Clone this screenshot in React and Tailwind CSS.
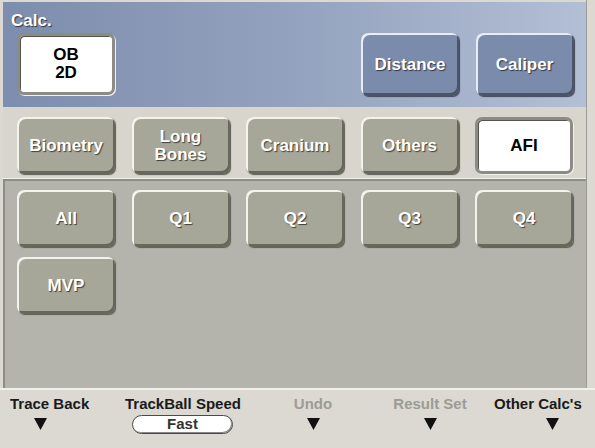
import React from "react";

const greyBtn =
  "flex items-center justify-center w-[98px] rounded-[7px] bg-[#a7a799] text-white font-bold text-[17px] leading-[18px] text-center [text-shadow:1px_1px_1px_#3f3f38] shadow-[inset_2px_2px_0_#f4f4ee,inset_-2px_-3px_0_#67675c,1px_1px_1px_#5c5c55]";

const blueBtn =
  "flex items-center justify-center w-[98px] h-[63px] rounded-[7px] bg-[#7b8bab] text-white font-bold text-[17px] [text-shadow:1px_1px_1px_#2f3545] shadow-[inset_2px_2px_0_#e8ecf4,inset_-2px_-3px_0_#4b5469,1px_1px_1px_#404656]";

const whiteBtn =
  "flex items-center justify-center w-[98px] rounded-[7px] bg-white text-black font-bold text-[17px] leading-[18px] text-center border-[3px] border-[#8c8c84] shadow-[inset_1px_1px_0_#55554f,1px_1px_0_#f2f2ec]";

const Arrow = () => (
  <svg width="13" height="12" viewBox="0 0 13 12">
    <polygon points="0,0 13,0 6.5,12" fill="#111" />
  </svg>
);

const Label = ({ children, dim }) => (
  <span
    className={
      "block whitespace-nowrap text-[15px] font-bold leading-[16px] " +
      (dim ? "text-[#9c9c96]" : "text-[#1a1a1a]")
    }
  >
    {children}
  </span>
);

export default function App() {
  return (
    <div className="w-[595px] h-[448px] bg-[#dbd9d1] font-['Liberation_Sans',Arial,sans-serif] overflow-hidden flex flex-col">
      <div className="ml-[3px] mr-[8px] h-[388px] flex flex-col border-r border-[#9c9c96]">
        {/* header */}
        <div className="h-[105px] mt-[2px] bg-gradient-to-r from-[#7d8dad] via-[#93a2be] to-[#b3bfd5] relative">
          <div className="absolute left-[8px] top-[6px] text-white font-bold text-[17px] [text-shadow:1px_1px_1px_#2f3545]">
            Calc.
          </div>
          <div className="flex pt-[31px] pl-[14px] gap-[16.5px]">
            <div className={whiteBtn + " h-[62px]"}>
              OB
              <br />
              2D
            </div>
            <div className="w-[213px]" />
            <div className={blueBtn}>Distance</div>
            <div className={blueBtn}>Caliper</div>
          </div>
        </div>

        {/* category row */}
        <div className="h-[72px] bg-[#d7d5cc] flex gap-[16.5px] pl-[14px] pt-[10px] border-b border-[#f2f2ec]">
          <div className={greyBtn + " h-[57px]"}>Biometry</div>
          <div className={greyBtn + " h-[57px]"}>
            Long
            <br />
            Bones
          </div>
          <div className={greyBtn + " h-[57px]"}>Cranium</div>
          <div className={greyBtn + " h-[57px]"}>Others</div>
          <div className={whiteBtn + " h-[57px]"}>AFI</div>
        </div>

        {/* sub buttons */}
        <div className="flex-1 bg-[#b4b4ad] border-t-2 border-l-2 border-[#8e8e88] pl-[12px] pt-[9px] flex flex-col gap-[10px]">
          <div className="flex gap-[16.5px]">
            <div className={greyBtn + " h-[57px]"}>All</div>
            <div className={greyBtn + " h-[57px]"}>Q1</div>
            <div className={greyBtn + " h-[57px]"}>Q2</div>
            <div className={greyBtn + " h-[57px]"}>Q3</div>
            <div className={greyBtn + " h-[57px]"}>Q4</div>
          </div>
          <div className="flex">
            <div className={greyBtn + " h-[57px]"}>MVP</div>
          </div>
        </div>
      </div>

      {/* bottom bar */}
      <div className="flex-1 border-t-2 border-[#f0efe9] flex items-start pt-[6px]">
        <div className="ml-[10px] w-[82px] flex flex-col">
          <Label>Trace Back</Label>
          <div className="mt-[6px] ml-[24px]">
            <Arrow />
          </div>
        </div>
        <div className="ml-[33px] w-[117px] flex flex-col">
          <Label>TrackBall Speed</Label>
          <div className="mt-[3px] ml-[7px] w-[101px] h-[19px] rounded-full bg-white border border-[#4a4a4a] shadow-[inset_-1px_-1px_0_#888] flex items-center justify-center text-[15px] font-bold text-[#333]">
            Fast
          </div>
        </div>
        <div className="ml-[51px] w-[40px] flex flex-col items-center">
          <Label dim>Undo</Label>
          <div className="mt-[6px]">
            <Arrow />
          </div>
        </div>
        <div className="ml-[57px] w-[80px] flex flex-col items-center">
          <Label dim>Result Set</Label>
          <div className="mt-[6px]">
            <Arrow />
          </div>
        </div>
        <div className="ml-[24px] w-[91px] flex flex-col">
          <Label>Other Calc's</Label>
          <div className="mt-[6px] ml-[52px]">
            <Arrow />
          </div>
        </div>
      </div>
    </div>
  );
}
